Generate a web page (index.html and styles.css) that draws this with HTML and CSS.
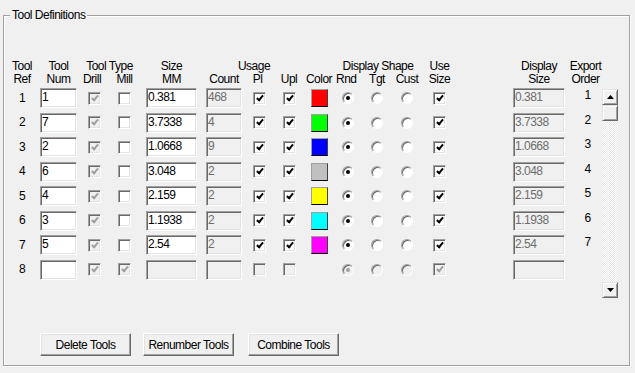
FILE: index.html
```
<!DOCTYPE html>
<html lang="en">
<head>
    <meta charset="UTF-8">
    <title>Tool Definitions</title>
    <link rel="stylesheet" href="styles.css">
</head>
<body>
    <fieldset class="group">
        <legend>Tool Definitions</legend>

        <div class="table-wrap">
            <div class="tools">
                <!-- header line 1 -->
                <div class="h">Tool</div>
                <div class="h">Tool</div>
                <div class="h h-type">Tool Type</div>
                <div class="h pad-field">Size</div>
                <div class="h h-usage">Usage</div>
                <div class="h"></div>
                <div class="h h-shape">Display Shape</div>
                <div class="h">Use</div>
                <div class="h pad-disp">Display</div>
                <div class="h h-order">Export</div>
                <!-- header line 2 -->
                <div class="h">Ref</div>
                <div class="h">Num</div>
                <div class="h h-drill">Drill</div>
                <div class="h">Mill</div>
                <div class="h pad-field">MM</div>
                <div class="h pad-field">Count</div>
                <div class="h h-pl">Pl</div>
                <div class="h">Upl</div>
                <div class="h">Color</div>
                <div class="h h-rnd">Rnd</div>
                <div class="h">Tgt</div>
                <div class="h">Cust</div>
                <div class="h">Size</div>
                <div class="h pad-disp">Size</div>
                <div class="h h-order">Order</div>

                <!-- row 1 -->
                <div class="ref">1</div>
                <div class="field num">1</div>
                <div class="chk dis on"></div>
                <div class="chk"></div>
                <div class="field size">0.381</div>
                <div class="field count dis">468</div>
                <div class="chk on"></div>
                <div class="chk on"></div>
                <div class="swatch red"></div>
                <div class="radio on"></div>
                <div class="radio"></div>
                <div class="radio"></div>
                <div class="chk on"></div>
                <div class="field disp dis">0.381</div>
                <div class="order">1</div>

                <!-- row 2 -->
                <div class="ref">2</div>
                <div class="field num">7</div>
                <div class="chk dis on"></div>
                <div class="chk"></div>
                <div class="field size">3.7338</div>
                <div class="field count dis">4</div>
                <div class="chk on"></div>
                <div class="chk on"></div>
                <div class="swatch green"></div>
                <div class="radio on"></div>
                <div class="radio"></div>
                <div class="radio"></div>
                <div class="chk on"></div>
                <div class="field disp dis">3.7338</div>
                <div class="order">2</div>

                <!-- row 3 -->
                <div class="ref">3</div>
                <div class="field num">2</div>
                <div class="chk dis on"></div>
                <div class="chk"></div>
                <div class="field size">1.0668</div>
                <div class="field count dis">9</div>
                <div class="chk on"></div>
                <div class="chk on"></div>
                <div class="swatch blue"></div>
                <div class="radio on"></div>
                <div class="radio"></div>
                <div class="radio"></div>
                <div class="chk on"></div>
                <div class="field disp dis">1.0668</div>
                <div class="order">3</div>

                <!-- row 4 -->
                <div class="ref">4</div>
                <div class="field num">6</div>
                <div class="chk dis on"></div>
                <div class="chk"></div>
                <div class="field size">3.048</div>
                <div class="field count dis">2</div>
                <div class="chk on"></div>
                <div class="chk on"></div>
                <div class="swatch gray"></div>
                <div class="radio on"></div>
                <div class="radio"></div>
                <div class="radio"></div>
                <div class="chk on"></div>
                <div class="field disp dis">3.048</div>
                <div class="order">4</div>

                <!-- row 5 -->
                <div class="ref">5</div>
                <div class="field num">4</div>
                <div class="chk dis on"></div>
                <div class="chk"></div>
                <div class="field size">2.159</div>
                <div class="field count dis">2</div>
                <div class="chk on"></div>
                <div class="chk on"></div>
                <div class="swatch yellow"></div>
                <div class="radio on"></div>
                <div class="radio"></div>
                <div class="radio"></div>
                <div class="chk on"></div>
                <div class="field disp dis">2.159</div>
                <div class="order">5</div>

                <!-- row 6 -->
                <div class="ref">6</div>
                <div class="field num">3</div>
                <div class="chk dis on"></div>
                <div class="chk"></div>
                <div class="field size">1.1938</div>
                <div class="field count dis">2</div>
                <div class="chk on"></div>
                <div class="chk on"></div>
                <div class="swatch cyan"></div>
                <div class="radio on"></div>
                <div class="radio"></div>
                <div class="radio"></div>
                <div class="chk on"></div>
                <div class="field disp dis">1.1938</div>
                <div class="order">6</div>

                <!-- row 7 -->
                <div class="ref">7</div>
                <div class="field num">5</div>
                <div class="chk dis on"></div>
                <div class="chk"></div>
                <div class="field size">2.54</div>
                <div class="field count dis">2</div>
                <div class="chk on"></div>
                <div class="chk on"></div>
                <div class="swatch magenta"></div>
                <div class="radio on"></div>
                <div class="radio"></div>
                <div class="radio"></div>
                <div class="chk on"></div>
                <div class="field disp dis">2.54</div>
                <div class="order">7</div>

                <!-- row 8 (empty, new tool) -->
                <div class="ref">8</div>
                <div class="field num"></div>
                <div class="chk dis on"></div>
                <div class="chk dis on"></div>
                <div class="field size dis"></div>
                <div class="field count dis"></div>
                <div class="chk dis"></div>
                <div class="chk dis"></div>
                <div></div>
                <div class="radio dis on"></div>
                <div class="radio dis"></div>
                <div class="radio dis"></div>
                <div class="chk dis on"></div>
                <div class="field disp dis"></div>
                <div class="order"></div>
            </div>

            <div class="scrollbar">
                <div class="sb-btn">
                    <svg width="7" height="4" viewBox="0 0 7 4"><path d="M3.5 0 L7 4 L0 4 Z" fill="#000"/></svg>
                </div>
                <div class="sb-btn sb-thumb"></div>
                <div class="sb-track"></div>
                <div class="sb-btn">
                    <svg width="7" height="4" viewBox="0 0 7 4"><path d="M0 0 L7 0 L3.5 4 Z" fill="#000"/></svg>
                </div>
            </div>
        </div>

        <div class="buttons">
            <button class="btn btn-delete">Delete Tools</button>
            <button class="btn btn-renumber">Renumber Tools</button>
            <button class="btn btn-combine">Combine Tools</button>
        </div>
    </fieldset>
</body>
</html>
```

FILE: styles.css
```
body {
    margin: 0;
    padding: 0;
    width: 635px;
    height: 373px;
    overflow: hidden;
    background-color: #f0f0f0;
    color: #000;
    font-family: "Liberation Sans", Arial, sans-serif;
    font-size: 12px;
    letter-spacing: -0.5px;
}

.group {
    box-sizing: border-box;
    margin: 9px 0 0 3px;
    padding: 0;
    width: 627px;
    height: 357px;
    border: 1px solid #a0a0a0;
    box-shadow: inset 1px 1px #fff, 1px 1px #fff;
}

.group legend {
    margin-left: 6px;
    padding: 0 2px;
    line-height: 13px;
    background: #f0f0f0;
}

.table-wrap {
    display: flex;
    align-items: flex-start;
    margin-top: 38px;
}

.tools {
    display: grid;
    grid-template-columns: 36px 37px 35px 25px 60px 45px 34px 26px 34px 24px 34px 26px 39px 106px 37px;
    grid-template-rows: 13px 13px repeat(8, 24.5px);
    align-items: center;
    line-height: 13px;
}

/* headers */
.h {
    align-self: end;
    text-align: center;
    white-space: nowrap;
}

.h-type {
    grid-column: span 2;
    padding-left: 5px;
}

.h-usage {
    grid-column: span 3;
    padding-left: 9px;
}

.h-shape {
    grid-column: span 3;
}

.h-drill {
    padding-right: 5px;
}

.h-pl {
    padding-right: 3px;
}

.h-rnd {
    padding-right: 5px;
}

.pad-field {
    padding-left: 9px;
}

.pad-disp {
    padding-left: 54px;
}

.h-order {
    padding-left: 4px;
}

/* cells */
.ref {
    text-align: center;
}

.order {
    align-self: start;
    padding: 3px 0 0 8px;
    text-align: center;
}

.field {
    box-sizing: border-box;
    height: 20px;
    padding-left: 1px;
    line-height: 16px;
    background: #fff;
    border: 1px solid;
    border-color: #a0a0a0 #fff #fff #a0a0a0;
    box-shadow: inset 1px 1px #696969, inset -1px -1px #e3e3e3;
    white-space: nowrap;
    overflow: hidden;
}

.field.dis {
    background: #f0f0f0;
    color: #6d6d6d;
}

.num {
    width: 37px;
}

.size {
    width: 51px;
    justify-self: end;
}

.count {
    width: 36px;
    justify-self: end;
}

.disp {
    width: 52px;
    justify-self: end;
}

.chk {
    position: relative;
    box-sizing: border-box;
    width: 13px;
    height: 13px;
    justify-self: center;
    background: #fff;
    border: 1px solid;
    border-color: #a0a0a0 #fff #fff #a0a0a0;
    box-shadow: inset 1px 1px #696969, inset -1px -1px #e3e3e3;
}

.chk.on::after {
    content: "";
    position: absolute;
    left: 4px;
    top: 1px;
    width: 2px;
    height: 5px;
    border-right: 2px solid #000;
    border-bottom: 2px solid #000;
    transform: rotate(40deg);
}

.chk.dis {
    background: #f0f0f0;
}

.chk.dis.on::after {
    border-color: #a0a0a0;
}

.radio {
    position: relative;
    box-sizing: border-box;
    width: 12px;
    height: 12px;
    justify-self: center;
    border-radius: 50%;
    background: #fff;
    border: 1px solid;
    border-color: #a0a0a0 #fff #fff #a0a0a0;
    box-shadow: inset 1px 1px #696969;
}

.radio.on::after {
    content: "";
    position: absolute;
    left: 3px;
    top: 3px;
    width: 4px;
    height: 4px;
    border-radius: 50%;
    background: #000;
}

.radio.dis {
    background: #f0f0f0;
}

.radio.dis.on::after {
    background: #a0a0a0;
}

.swatch {
    box-sizing: border-box;
    width: 17px;
    height: 18px;
    justify-self: center;
    border: 1px solid;
    border-color: #a0a0a0 #404040 #000 #a0a0a0;
}

.red { background: #ff0000; }
.green { background: #00ff00; }
.blue { background: #0000ff; }
.gray { background: #c0c0c0; }
.yellow { background: #ffff00; }
.cyan { background: #00ffff; }
.magenta { background: #ff00ff; }

/* scrollbar */
.scrollbar {
    display: flex;
    flex-direction: column;
    width: 16px;
    height: 209px;
    margin-top: 29px;
}

.sb-btn {
    box-sizing: border-box;
    display: flex;
    align-items: center;
    justify-content: center;
    height: 16px;
    background: #f0f0f0;
    border: 1px solid;
    border-color: #e3e3e3 #696969 #696969 #e3e3e3;
    box-shadow: inset 1px 1px #fff, inset -1px -1px #a0a0a0;
}

.sb-track {
    flex: 1;
    background: repeating-conic-gradient(#fff 0 25%, #e6e6e6 0 50%) 0 0 / 2px 2px;
}

/* buttons */
.buttons {
    display: flex;
    margin: 35px 0 0 36px;
}

.btn {
    box-sizing: border-box;
    width: 91px;
    height: 23px;
    padding: 0;
    font-family: inherit;
    font-size: 12px;
    letter-spacing: -0.5px;
    white-space: nowrap;
    color: #000;
    background: #f0f0f0;
    border: 1px solid;
    border-color: #fff #696969 #696969 #fff;
    box-shadow: inset -1px -1px #a0a0a0, inset 1px 1px #e3e3e3;
}

.btn-renumber {
    margin-left: 12px;
}

.btn-combine {
    margin-left: 14px;
}
```
